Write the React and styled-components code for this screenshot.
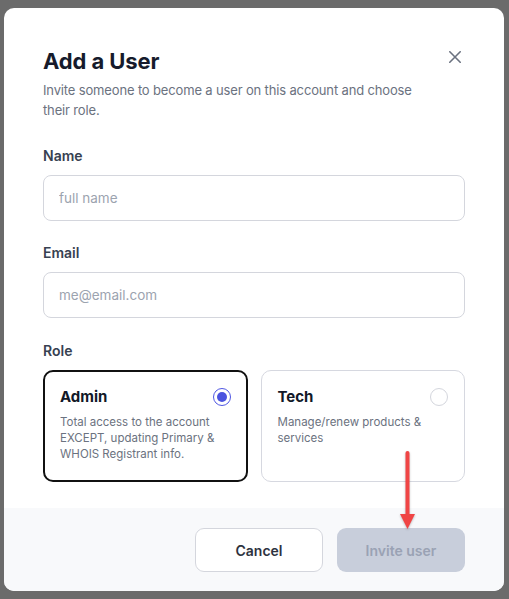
import React, { useState } from "react";
import styled, { createGlobalStyle } from "styled-components";

const Global = createGlobalStyle`
  * { box-sizing: border-box; }
  html, body { margin: 0; padding: 0; }
  body {
    background: #6b6b6b;
    font-family: Inter, "Noto Sans", "Liberation Sans", sans-serif;
    -webkit-font-smoothing: antialiased;
  }
`;

const Backdrop = styled.div`
  width: 509px;
  height: 599px;
  background: #6b6b6b;
  padding: 8px 5px 8px 4px;
  display: flex;
`;

const Modal = styled.div`
  position: relative;
  width: 500px;
  height: 583px;
  background: #ffffff;
  border-radius: 10px;
  overflow: hidden;
  display: flex;
  flex-direction: column;
`;

const Body = styled.div`
  flex: 1;
  padding: 39px 39px 0 39px;
  display: flex;
  flex-direction: column;
`;

const Header = styled.div`
  display: flex;
  justify-content: space-between;
  align-items: flex-start;
`;

const Title = styled.h2`
  margin: 0;
  font-size: 22px;
  line-height: 28px;
  font-weight: 700;
  color: #161b2c;
  letter-spacing: -0.1px;
`;

const CloseButton = styled.button`
  border: none;
  background: none;
  padding: 0;
  margin: 4px 4px 0 0;
  width: 12px;
  height: 12px;
  display: flex;
  align-items: center;
  justify-content: center;
  color: #6b7280;
  cursor: pointer;
`;

const Subtitle = styled.p`
  margin: 6px 0 0 0;
  max-width: 385px;
  font-size: 13px;
  line-height: 19.5px;
  letter-spacing: -0.15px;
  color: #6b7280;
`;

const Field = styled.div`
  display: flex;
  flex-direction: column;
  margin-top: ${(p) => p.$mt}px;
`;

const Label = styled.label`
  font-size: 14px;
  line-height: 20px;
  font-weight: 600;
  color: #374151;
`;

const Input = styled.input`
  margin-top: 9px;
  height: 46px;
  width: 100%;
  border: 1px solid #d4d6dd;
  border-radius: 8px;
  padding: 0 15px;
  font-family: inherit;
  font-size: 13.5px;
  color: #111827;
  outline: none;
  &::placeholder { color: #9ca3af; }
`;

const Cards = styled.div`
  margin-top: 9px;
  display: grid;
  grid-template-columns: 1fr 1fr;
  gap: 13px;
`;

const Card = styled.div`
  height: 112px;
  border-radius: 10px;
  border: ${(p) => (p.$active ? "2px solid #111111" : "1px solid #d6d8e0")};
  padding: ${(p) => (p.$active ? "14px 15px" : "15px 16px")};
  display: flex;
  flex-direction: column;
  cursor: pointer;
  background: #fff;
`;

const CardHead = styled.div`
  display: flex;
  justify-content: space-between;
  align-items: center;
  height: 20px;
  margin-top: 1px;
`;

const CardTitle = styled.div`
  font-size: 15px;
  line-height: 20px;
  font-weight: 700;
  color: #111827;
`;

const Radio = styled.span`
  width: 18px;
  height: 18px;
  border-radius: 50%;
  border: 1.5px solid ${(p) => (p.$checked ? "#4f56e3" : "#d4d6dd")};
  display: flex;
  align-items: center;
  justify-content: center;
  &::after {
    content: "";
    width: 10px;
    height: 10px;
    border-radius: 50%;
    background: #4b53df;
    display: ${(p) => (p.$checked ? "block" : "none")};
  }
`;

const CardDesc = styled.div`
  margin-top: 7px;
  font-size: 11.5px;
  line-height: 16px;
  color: #6b7280;
`;

const Footer = styled.div`
  height: 83px;
  background: #f8f9fb;
  padding: 20px 39px 19px;
  display: flex;
  justify-content: flex-end;
  gap: 14px;
`;

const Button = styled.button`
  width: 128px;
  height: 44px;
  border-radius: 9px;
  font-family: inherit;
  font-size: 14px;
  font-weight: 600;
  border: ${(p) => (p.$primary ? "none" : "1px solid #d4d6dd")};
  background: ${(p) => (p.$primary ? "#c8cedb" : "#ffffff")};
  color: ${(p) => (p.$primary ? "#9aa2b4" : "#2d3340")};
  cursor: ${(p) => (p.$primary ? "default" : "pointer")};
`;

const Arrow = styled.svg`
  position: absolute;
  left: 392px;
  top: 443px;
  filter: drop-shadow(0 1px 1px rgba(0, 0, 0, 0.25));
`;

const roles = [
  {
    id: "admin",
    title: "Admin",
    desc: "Total access to the account EXCEPT, updating Primary & WHOIS Registrant info.",
  },
  {
    id: "tech",
    title: "Tech",
    desc: "Manage/renew products & services",
  },
];

export default function App() {
  const [role, setRole] = useState("admin");
  return (
    <>
      <Global />
      <Backdrop>
        <Modal>
          <Body>
            <Header>
              <Title>Add a User</Title>
              <CloseButton aria-label="Close">
                <svg width="12" height="12" viewBox="0 0 12 12" fill="none">
                  <path d="M0.8 0.8 L11.2 11.2 M11.2 0.8 L0.8 11.2" stroke="currentColor" strokeWidth="1.6" strokeLinecap="round" />
                </svg>
              </CloseButton>
            </Header>
            <Subtitle>
              Invite someone to become a user on this account and choose their role.
            </Subtitle>
            <Field $mt={26}>
              <Label>Name</Label>
              <Input placeholder="full name" />
            </Field>
            <Field $mt={22}>
              <Label>Email</Label>
              <Input placeholder="me@email.com" />
            </Field>
            <Field $mt={23}>
              <Label>Role</Label>
              <Cards>
                {roles.map((r) => (
                  <Card key={r.id} $active={role === r.id} onClick={() => setRole(r.id)}>
                    <CardHead>
                      <CardTitle>{r.title}</CardTitle>
                      <Radio $checked={role === r.id} />
                    </CardHead>
                    <CardDesc>{r.desc}</CardDesc>
                  </Card>
                ))}
              </Cards>
            </Field>
          </Body>
          <Footer>
            <Button>Cancel</Button>
            <Button $primary>Invite user</Button>
          </Footer>
          <Arrow width="24" height="80" viewBox="0 0 24 80">
            <line x1="11.5" y1="2" x2="11.5" y2="66" stroke="#f04545" strokeWidth="4" strokeLinecap="round" />
            <polygon points="4,63 19,63 11.5,78" fill="#f04545" />
          </Arrow>
        </Modal>
      </Backdrop>
    </>
  );
}
